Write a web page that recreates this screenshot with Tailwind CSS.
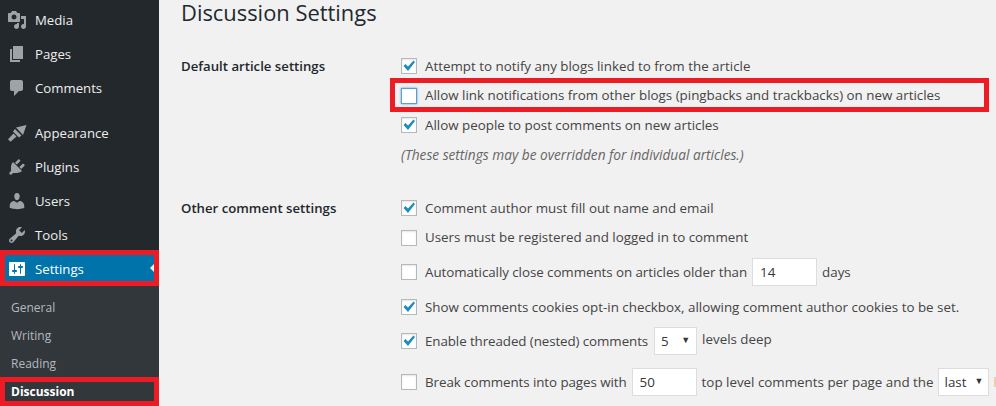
<!DOCTYPE html>
<html lang="en">
<head>
    <meta charset="UTF-8">
    <title>Discussion Settings</title>
    <script src="https://cdn.jsdelivr.net/npm/@tailwindcss/browser@4"></script>
</head>
<body class="relative flex h-[406px] w-[996px] overflow-hidden bg-[#f1f1f1] font-['Open_Sans',sans-serif] text-[13.37px] text-[#444]">
    <!-- Sidebar -->
    <aside class="w-[159px] shrink-0 bg-[#23282d] pt-[3px] text-[13.2px] text-[#eee]">
        <a class="flex h-[34px] items-center">
            <svg class="ml-[7px] h-[20px] w-[20px] text-[#9ea3a8]" viewBox="0 0 20 20" fill="currentColor"><path fill-rule="evenodd" d="M13 11V4c0-.55-.45-1-1-1h-1.670L9 1H5L3.670 3H2c-.55 0-1 .45-1 1v7c0 .55.45 1 1 1h10c.55 0 1-.45 1-1zM7 4.500c1.380 0 2.500 1.120 2.500 2.500S8.380 9.500 7 9.500 4.500 8.380 4.500 7 5.620 4.500 7 4.500zM14 6h5v10.500c0 1.380-1.120 2.500-2.500 2.500S14 17.880 14 16.500s1.120-2.500 2.500-2.500c.17 0 .34.020.5.050V9h-3V6zm-4 8.050V13h2v3.500c0 1.380-1.120 2.500-2.500 2.500S7 17.880 7 16.500 8.120 14 9.500 14c.17 0 .34.020.5.050z"/></svg>
            <span class="ml-[8px] pt-[2px]">Media</span>
        </a>
        <a class="flex h-[34px] items-center">
            <svg class="ml-[7px] h-[20px] w-[20px] text-[#9ea3a8]" viewBox="0 0 20 20" fill="currentColor"><path d="M6 15V2h10v13H6zm-1 1h8v2H3V5h2v11z"/></svg>
            <span class="ml-[8px] pt-[2px]">Pages</span>
        </a>
        <a class="flex h-[34px] items-center">
            <svg class="ml-[7px] h-[20px] w-[20px] text-[#9ea3a8]" viewBox="0 0 20 20" fill="currentColor"><path d="M5 2h9c1.100 0 2 .9 2 2v7c0 1.100-.9 2-2 2h-2l-5 5v-5H5c-1.100 0-2-.9-2-2V4c0-1.100.9-2 2-2z"/></svg>
            <span class="ml-[8px] pt-[2px]">Comments</span>
        </a>
        <a class="mt-[11px] flex h-[34px] items-center">
            <svg class="ml-[7px] h-[20px] w-[20px] text-[#9ea3a8]" viewBox="0 0 20 20" fill="currentColor"><path d="M9 4.500L19.500 2 16 12zM8 6l6.500 6.500-2.500 2-6-6zM6.500 10.500l3 3-6 5.200-2.500-2.500z"/></svg>
            <span class="ml-[8px] pt-[2px]">Appearance</span>
        </a>
        <a class="flex h-[34px] items-center">
            <svg class="ml-[7px] h-[20px] w-[20px] text-[#9ea3a8]" viewBox="0 0 20 20" fill="currentColor"><path d="M13.110 4.360L9.870 7.600 8 5.730l3.240-3.240c.35-.34 1.050-.2 1.560.32.52.51.66 1.210.31 1.550zm-8 1.770l.91-1.120 9.010 9.010-1.190.84c-.71.71-2.630 1.160-3.820 1.160H6.140L4.900 17.260c-.59.59-1.540.59-2.120 0-.59-.58-.59-1.530 0-2.120l1.240-1.240v-3.880c0-1.130.4-3.190 1.090-3.890zm7.260 3.970l3.240-3.240c.34-.35 1.040-.21 1.550.31.52.51.66 1.210.31 1.550l-3.240 3.250z"/></svg>
            <span class="ml-[8px] pt-[2px]">Plugins</span>
        </a>
        <a class="flex h-[34px] items-center">
            <svg class="ml-[7px] h-[20px] w-[20px] text-[#9ea3a8]" viewBox="0 0 20 20" fill="currentColor"><path d="M10 9.250c-2.270 0-2.730-3.440-2.730-3.440C7 4.020 7.820 2 9.970 2c2.160 0 2.980 2.020 2.710 3.810 0 0-.41 3.440-2.680 3.440zm0 2.570L12.720 10c2.390 0 4.520 2.330 4.520 4.530v2.490s-3.650 1.130-7.240 1.130c-3.650 0-7.240-1.130-7.240-1.130v-2.490c0-2.250 1.940-4.480 4.470-4.480z"/></svg>
            <span class="ml-[8px] pt-[2px]">Users</span>
        </a>
        <a class="flex h-[34px] items-center">
            <svg class="ml-[7px] h-[20px] w-[20px] text-[#9ea3a8]" viewBox="0 0 20 20" fill="currentColor"><path fill-rule="evenodd" d="M16.680 9.770c-1.340 1.340-3.300 1.670-4.950.99l-5.410 6.520c-.99.99-2.590.99-3.570 0-.99-.98-.99-2.580 0-3.570l6.520-5.420c-.68-1.650-.35-3.610.99-4.950 1.280-1.280 3.120-1.620 4.720-1.060l-2.890 2.890 2.820 2.820 2.860-2.870c.53 1.580.18 3.400-1.090 4.670zM3.810 16.210c.4.390 1.030.39 1.420 0 .4-.4.4-1.030 0-1.420-.39-.4-1.020-.4-1.420 0-.39.39-.39 1.020 0 1.420z"/></svg>
            <span class="ml-[8px] pt-[2px]">Tools</span>
        </a>
        <a class="relative flex h-[34px] items-center bg-[#0073aa] text-white">
            <svg class="ml-[7px] h-[20px] w-[20px] text-white" viewBox="0 0 20 20" fill="currentColor"><path fill-rule="evenodd" d="M18 16V4c0-.55-.45-1-1-1H3c-.55 0-1 .45-1 1v12c0 .55.45 1 1 1h14c.55 0 1-.45 1-1zM8 11h1c.55 0 1 .45 1 1s-.45 1-1 1H8v1.500c0 .28-.22.5-.5.5s-.5-.22-.5-.5V13H6c-.55 0-1-.45-1-1s.45-1 1-1h1V5.500c0-.28.22-.5.5-.5s.5.22.5.5V11zm5-2h-1c-.55 0-1-.45-1-1s.45-1 1-1h1V5.500c0-.28.22-.5.5-.5s.5.22.5.5V7h1c.55 0 1 .45 1 1s-.45 1-1 1h-1v5.500c0 .28-.22.5-.5.5s-.5-.22-.5-.5V9z"/></svg>
            <span class="ml-[8px] pt-[2px]">Settings</span>
            <span class="absolute right-[5px] top-[12px] h-0 w-0 border-y-[4px] border-r-[4px] border-y-transparent border-r-[#f1f1f1]"></span>
        </a>
        <ul class="bg-[#32373c] pt-[7px] text-[12px] text-[#b4b9be]">
            <li class="flex h-[28px] items-center pt-[2px] pl-[11px]">General</li>
            <li class="flex h-[28px] items-center pt-[2px] pl-[11px]">Writing</li>
            <li class="flex h-[28px] items-center pt-[2px] pl-[11px]">Reading</li>
            <li class="flex h-[28px] items-center pt-[2px] pl-[11px] font-bold text-white">Discussion</li>
        </ul>
    </aside>

    <!-- Main content -->
    <main class="min-w-0 flex-1 pl-[22px]">
        <h1 class="h-[51px] text-[21.9px] leading-[26px] text-[#23282d]">Discussion Settings</h1>

        <section class="flex h-[142px]">
            <h2 class="w-[220px] shrink-0 pt-[5px] text-[13.2px] leading-[20px] font-semibold text-[#23282d]">Default article settings</h2>
            <div>
                <label class="flex h-[30px] items-center gap-[8px]"><span class="flex h-[16px] w-[16px] items-center justify-center border border-[#b4b9be] bg-white shadow-[inset_0_1px_2px_rgba(0,0,0,0.1)]"><svg class="h-[14px] w-[14px] text-[#1e8cbe]" viewBox="0 0 14 14" fill="currentColor"><path d="M1.500 7l2-2 2.500 2.500L11.500 1.500l1.500 1.500-7 9z"/></svg></span>Attempt to notify any blogs linked to from the article</label>
                <label class="flex h-[29px] items-center gap-[8px]"><span class="h-[16px] w-[16px] border border-[#5b9dd9] bg-white shadow-[0_0_2px_rgba(30,140,190,0.8)]"></span>Allow link notifications from other blogs (pingbacks and trackbacks) on new articles</label>
                <label class="flex h-[30px] items-center gap-[8px]"><span class="flex h-[16px] w-[16px] items-center justify-center border border-[#b4b9be] bg-white shadow-[inset_0_1px_2px_rgba(0,0,0,0.1)]"><svg class="h-[14px] w-[14px] text-[#1e8cbe]" viewBox="0 0 14 14" fill="currentColor"><path d="M1.500 7l2-2 2.500 2.500L11.500 1.500l1.500 1.500-7 9z"/></svg></span>Allow people to post comments on new articles</label>
                <p class="flex h-[30px] items-center text-[13.68px] text-[#666] italic">(These settings may be overridden for individual articles.)</p>
            </div>
        </section>

        <section class="flex">
            <h2 class="w-[220px] shrink-0 pt-[5px] text-[13.2px] leading-[20px] font-semibold text-[#23282d]">Other comment settings</h2>
            <div>
                <label class="flex h-[30px] items-center gap-[8px]"><span class="flex h-[16px] w-[16px] items-center justify-center border border-[#b4b9be] bg-white shadow-[inset_0_1px_2px_rgba(0,0,0,0.1)]"><svg class="h-[14px] w-[14px] text-[#1e8cbe]" viewBox="0 0 14 14" fill="currentColor"><path d="M1.500 7l2-2 2.500 2.500L11.500 1.500l1.500 1.500-7 9z"/></svg></span>Comment author must fill out name and email</label>
                <label class="flex h-[29px] items-center gap-[8px]"><span class="h-[16px] w-[16px] border border-[#b4b9be] bg-white shadow-[inset_0_1px_2px_rgba(0,0,0,0.1)]"></span>Users must be registered and logged in to comment</label>
                <label class="flex h-[40px] items-center gap-[8px]"><span class="h-[16px] w-[16px] border border-[#b4b9be] bg-white shadow-[inset_0_1px_2px_rgba(0,0,0,0.1)]"></span><span class="tracking-[-0.06px]">Automatically close comments on articles older than</span><span class="-ml-[3px] flex h-[28px] w-[65px] items-center border border-[#ddd] bg-white pl-[7px] text-[#32373c]">14</span><span class="-ml-[3px]">days</span></label>
                <label class="flex h-[30px] items-center gap-[8px]"><span class="flex h-[16px] w-[16px] items-center justify-center border border-[#b4b9be] bg-white shadow-[inset_0_1px_2px_rgba(0,0,0,0.1)]"><svg class="h-[14px] w-[14px] text-[#1e8cbe]" viewBox="0 0 14 14" fill="currentColor"><path d="M1.500 7l2-2 2.500 2.500L11.500 1.500l1.500 1.500-7 9z"/></svg></span>Show comments cookies opt-in checkbox, allowing comment author cookies to be set.</label>
                <label class="flex h-[38px] items-center gap-[8px]"><span class="flex h-[16px] w-[16px] items-center justify-center border border-[#b4b9be] bg-white shadow-[inset_0_1px_2px_rgba(0,0,0,0.1)]"><svg class="h-[14px] w-[14px] text-[#1e8cbe]" viewBox="0 0 14 14" fill="currentColor"><path d="M1.500 7l2-2 2.500 2.500L11.500 1.500l1.500 1.500-7 9z"/></svg></span><span class="tracking-[-0.09px]">Enable threaded (nested) comments</span><span class="-ml-[2px] flex h-[28px] w-[43px] items-center justify-between border border-[#ddd] bg-white pr-[6px] pl-[6px] text-[#32373c]">5<span class="-mt-[2px] text-[9px]">▼</span></span><span class="-mt-[3px] -ml-[3px]">levels deep</span></label>
                <label class="mt-[2px] flex h-[40px] items-center gap-[8px] whitespace-nowrap"><span class="h-[16px] w-[16px] border border-[#b4b9be] bg-white shadow-[inset_0_1px_2px_rgba(0,0,0,0.1)]"></span><span class="tracking-[-0.07px]">Break comments into pages with</span><span class="-ml-[3px] flex h-[28px] w-[65px] items-center border border-[#ddd] bg-white pl-[7px] text-[#32373c]">50</span><span class="-ml-[3px]">top level comments per page and the</span><span class="-ml-[4px] flex h-[28px] w-[51px] items-center justify-between border border-[#ddd] bg-white pr-[4px] pl-[6px] text-[#32373c]">last<span class="-mt-[2px] text-[9px]">▼</span></span><span class="-ml-[3px] h-[10px] w-[2px] shrink-0 bg-[#f0cfa0]"></span></label>
            </div>
        </section>
    </main>

    <!-- Red annotation boxes -->
    <div class="absolute top-[250px] left-0 h-[36px] w-[159px] border-[5px] border-[#ed1c24]"></div>
    <div class="absolute top-[377px] left-0 h-[29px] w-[159px] border-[5px] border-[#ed1c24]"></div>
    <div class="absolute top-[78px] left-[390px] h-[34px] w-[599px] border-[5px] border-[#ed1c24]"></div>
</body>
</html>
